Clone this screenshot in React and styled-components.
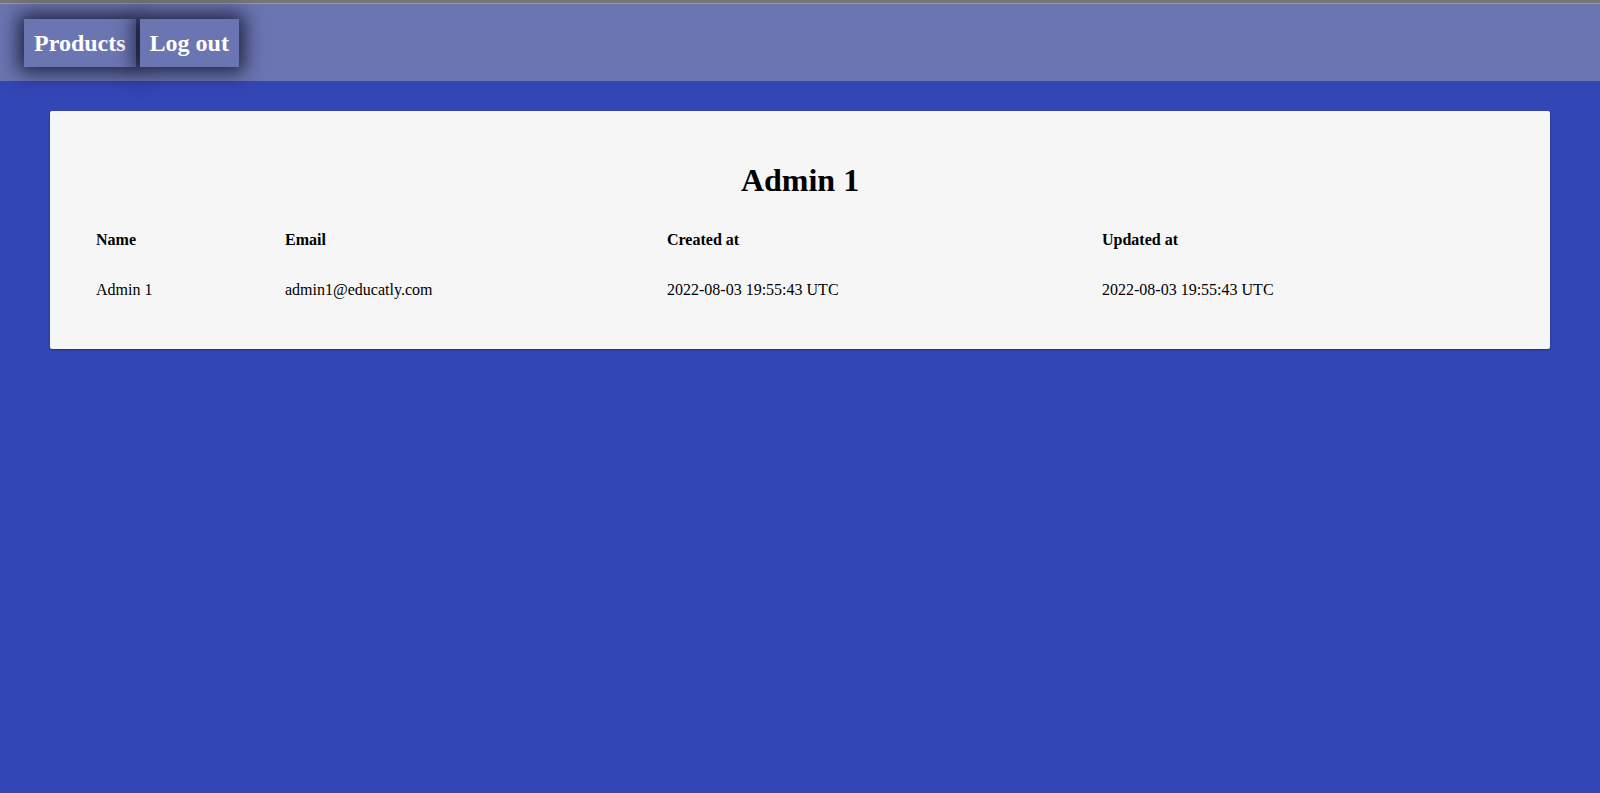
import React from "react";
import styled, { createGlobalStyle } from "styled-components";

const Global = createGlobalStyle`
  html, body { margin: 0; padding: 0; }
  body {
    background: #3346b5;
    font-family: "Liberation Serif", "Times New Roman", serif;
    color: #000;
    min-height: 793px;
  }
`;

const TopStrip = styled.div`
  height: 3px;
  background: #777777;
  border-bottom: 1px solid #9a9a9a;
`;

const NavBar = styled.nav`
  height: 77px;
  background: #6b75b1;
  display: flex;
  align-items: flex-start;
  gap: 4px;
  padding: 15px 0 0 24px;
  box-sizing: border-box;
`;

const NavButton = styled.a`
  display: flex;
  align-items: center;
  height: 48px;
  padding: 0 10px;
  background: #6b75b1;
  color: #fff;
  font-weight: bold;
  font-size: 24px;
  text-decoration: none;
  box-shadow: 0 0 18px 5px rgba(10, 14, 35, 0.8);
  cursor: pointer;
`;

const Main = styled.main`
  padding: 30px 50px;
`;

const Card = styled.section`
  background: #f6f6f6;
  border-radius: 2px;
  box-shadow: 0 1px 2px rgba(0, 0, 0, 0.35);
  padding: 30px 46px 41px;
`;

const Title = styled.h1`
  margin: 21px 0 21px;
  text-align: center;
  font-size: 32px;
  font-weight: bold;
  line-height: 37px;
`;

const Table = styled.div`
  display: grid;
  grid-template-columns: 189px 382px 435px 1fr;
  row-gap: 14px;
  padding-top: 2px;
`;

const Cell = styled.div`
  padding: 9px 0;
  font-size: 16px;
  line-height: 18px;
  font-weight: ${(p) => (p.$head ? "bold" : "normal")};
`;

const headers = ["Name", "Email", "Created at", "Updated at"];
const row = ["Admin 1", "admin1@educatly.com", "2022-08-03 19:55:43 UTC", "2022-08-03 19:55:43 UTC"];

export default function App() {
  return (
    <>
      <Global />
      <TopStrip />
      <NavBar>
        <NavButton>Products</NavButton>
        <NavButton>Log out</NavButton>
      </NavBar>
      <Main>
        <Card>
          <Title>Admin 1</Title>
          <Table>
            {headers.map((h) => (
              <Cell key={h} $head>{h}</Cell>
            ))}
            {row.map((v, i) => (
              <Cell key={i}>{v}</Cell>
            ))}
          </Table>
        </Card>
      </Main>
    </>
  );
}
